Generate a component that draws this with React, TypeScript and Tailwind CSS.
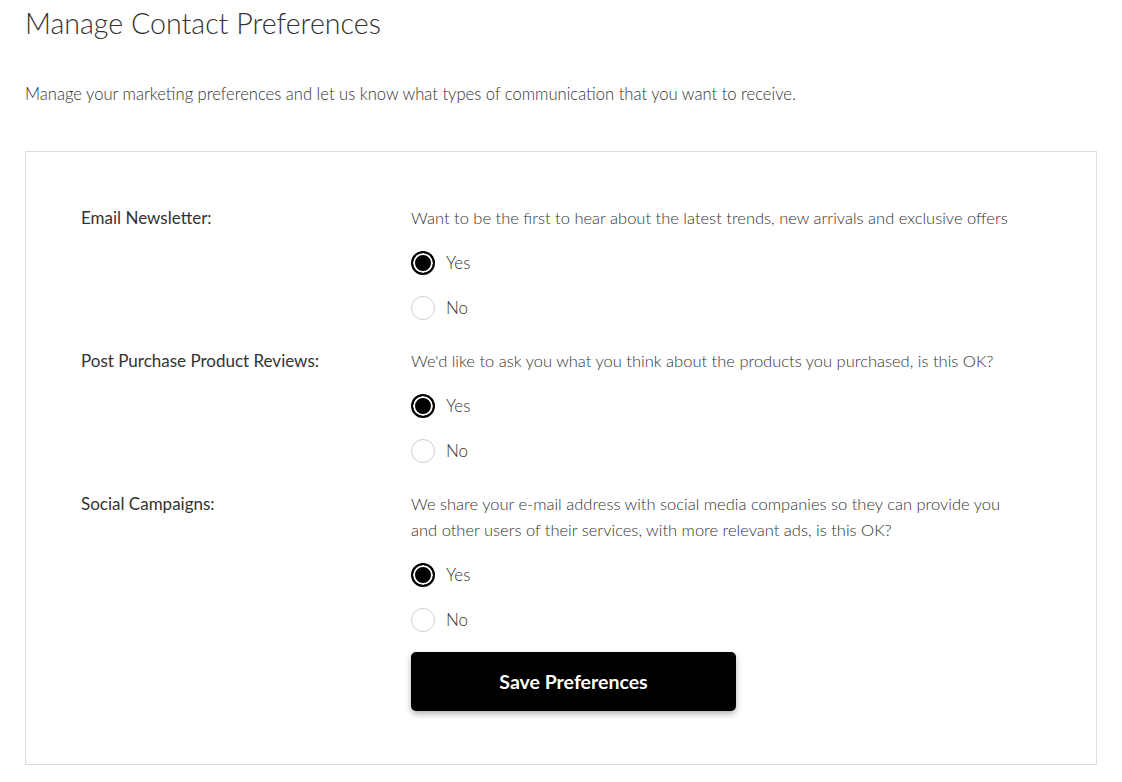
import { useState } from 'react'

type Choice = 'yes' | 'no'

const prefs = [
  {
    key: 'newsletter',
    label: 'Email Newsletter:',
    text: 'Want to be the first to hear about the latest trends, new arrivals and exclusive offers'
  },
  {
    key: 'reviews',
    label: 'Post Purchase Product Reviews:',
    text: "We'd like to ask you what you think about the products you purchased, is this OK?"
  },
  {
    key: 'social',
    label: 'Social Campaigns:',
    text: 'We share your e-mail address with social media companies so they can provide you and other users of their services, with more relevant ads, is this OK?'
  }
]

function Radio({ checked, label, onClick }: { checked: boolean; label: string; onClick: () => void }) {
  return (
    <button type="button" onClick={onClick} className="flex items-center h-6 text-left">
      {checked ? (
        <span className="w-6 h-6 rounded-full border-2 border-black bg-black shadow-[inset_0_0_0_2px_#fff]" />
      ) : (
        <span className="w-6 h-6 rounded-full border border-[#cfcfcf] bg-white" />
      )}
      <span className="ml-[11px] text-[17px] font-light text-[#333]">{label}</span>
    </button>
  )
}

export default function App() {
  const [values, setValues] = useState<Record<string, Choice>>({
    newsletter: 'yes',
    reviews: 'yes',
    social: 'yes'
  })

  return (
    <div className="min-h-screen bg-white px-[25px] pb-4 text-[#333]" style={{ fontFamily: 'Lato, "Open Sans", sans-serif' }}>
      <h1 className="pt-[4px] text-[28.6px] leading-[38px] font-light text-[#333]">Manage Contact Preferences</h1>
      <p className="mt-[39px] text-[16.6px] leading-[26px] font-light text-[#333]">
        Manage your marketing preferences and let us know what types of communication that you want to receive.
      </p>

      <div className="mt-[44px] border border-[#ddd] pt-[53px] pb-[53px]">
        <div className="flex flex-col gap-[28px]">
          {prefs.map((p) => (
            <div key={p.key} className="flex">
              <div className="w-[385px] shrink-0 pl-[55px] text-[17px] leading-[26px] text-[#333]">{p.label}</div>
              <div className="w-[610px]">
                <p className="text-[16.5px] leading-[26px] font-light text-[#333]">{p.text}</p>
                <div className="mt-[20px] flex flex-col gap-[21px]">
                  <Radio
                    checked={values[p.key] === 'yes'}
                    label="Yes"
                    onClick={() => setValues((prev) => ({ ...prev, [p.key]: 'yes' }))}
                  />
                  <Radio
                    checked={values[p.key] === 'no'}
                    label="No"
                    onClick={() => setValues((prev) => ({ ...prev, [p.key]: 'no' }))}
                  />
                </div>
              </div>
            </div>
          ))}
        </div>
        <div className="pl-[385px] mt-[20px]">
          <button
            type="button"
            className="w-[325px] h-[59px] rounded-[5px] bg-black text-white text-[19.5px] font-bold shadow-[0_3px_6px_rgba(0,0,0,0.3)]"
          >
            Save Preferences
          </button>
        </div>
      </div>
    </div>
  )
}
